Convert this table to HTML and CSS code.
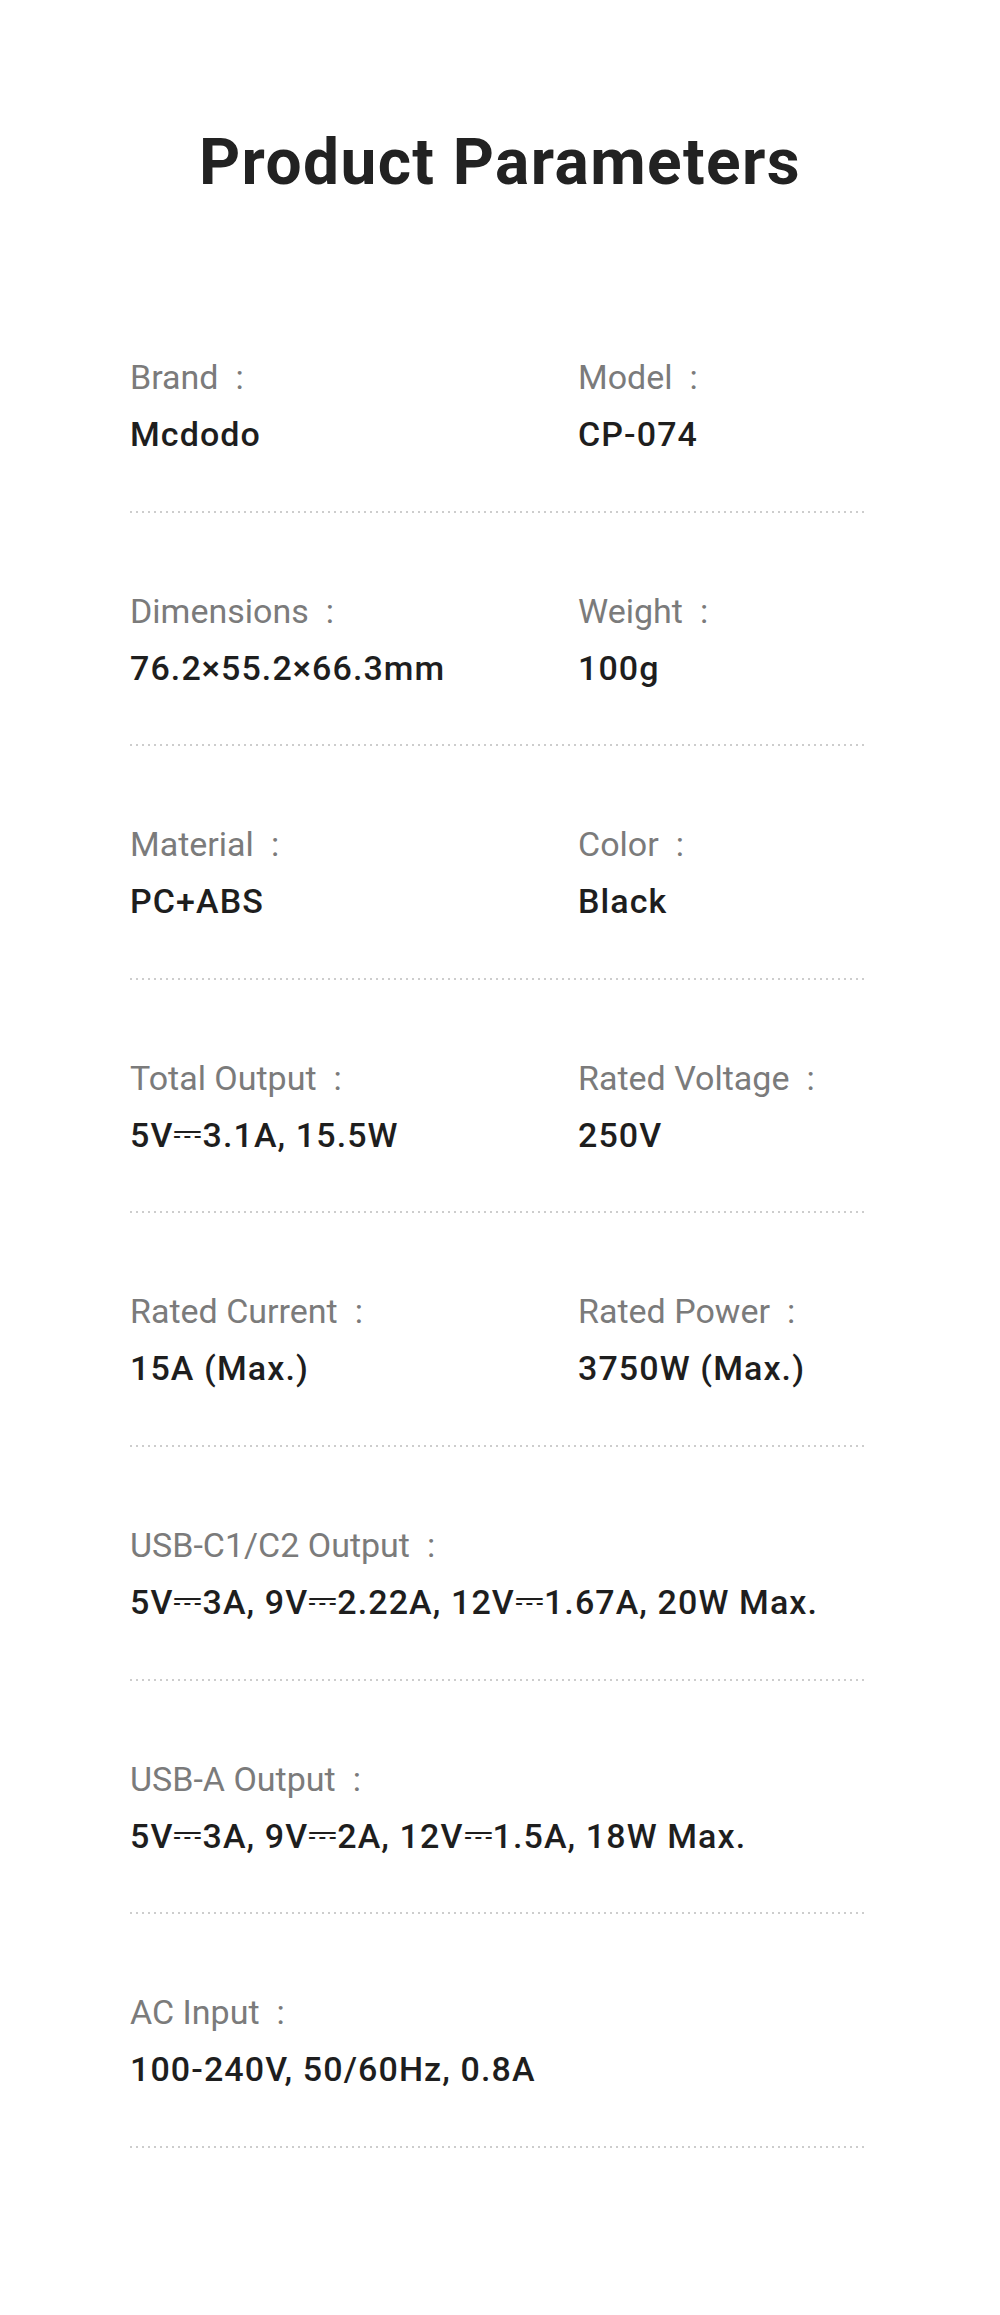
FILE: index.html
```html
<!DOCTYPE html>
<html lang="en">
<head>
    <meta charset="UTF-8">
    <meta name="viewport" content="width=device-width, initial-scale=1.0">
    <title>Product Parameters</title>
    <link rel="stylesheet" href="styles.css">
</head>
<body>
    <h1 class="title">Product Parameters</h1>

    <div class="params">
        <div class="param-row">
            <div class="param">
                <div class="param-label">Brand<span class="colon">:</span></div>
                <div class="param-value">Mcdodo</div>
            </div>
            <div class="param">
                <div class="param-label">Model<span class="colon">:</span></div>
                <div class="param-value">CP-074</div>
            </div>
        </div>
        <div class="param-row">
            <div class="param">
                <div class="param-label">Dimensions<span class="colon">:</span></div>
                <div class="param-value">76.2×55.2×66.3mm</div>
            </div>
            <div class="param">
                <div class="param-label">Weight<span class="colon">:</span></div>
                <div class="param-value">100g</div>
            </div>
        </div>
        <div class="param-row">
            <div class="param">
                <div class="param-label">Material<span class="colon">:</span></div>
                <div class="param-value">PC+ABS</div>
            </div>
            <div class="param">
                <div class="param-label">Color<span class="colon">:</span></div>
                <div class="param-value">Black</div>
            </div>
        </div>
        <div class="param-row">
            <div class="param">
                <div class="param-label">Total Output<span class="colon">:</span></div>
                <div class="param-value">5V<span class="dc">⎓</span>3.1A, 15.5W</div>
            </div>
            <div class="param">
                <div class="param-label">Rated Voltage<span class="colon">:</span></div>
                <div class="param-value">250V</div>
            </div>
        </div>
        <div class="param-row">
            <div class="param">
                <div class="param-label">Rated Current<span class="colon">:</span></div>
                <div class="param-value">15A (Max.)</div>
            </div>
            <div class="param">
                <div class="param-label">Rated Power<span class="colon">:</span></div>
                <div class="param-value">3750W (Max.)</div>
            </div>
        </div>
        <div class="param-row">
            <div class="param wide">
                <div class="param-label">USB-C1/C2 Output<span class="colon">:</span></div>
                <div class="param-value">5V<span class="dc">⎓</span>3A, 9V<span class="dc">⎓</span>2.22A, 12V<span class="dc">⎓</span>1.67A, 20W Max.</div>
            </div>
        </div>
        <div class="param-row">
            <div class="param wide">
                <div class="param-label">USB-A Output<span class="colon">:</span></div>
                <div class="param-value">5V<span class="dc">⎓</span>3A, 9V<span class="dc">⎓</span>2A, 12V<span class="dc">⎓</span>1.5A, 18W Max.</div>
            </div>
        </div>
        <div class="param-row">
            <div class="param wide">
                <div class="param-label">AC Input<span class="colon">:</span></div>
                <div class="param-value">100-240V, 50/60Hz, 0.8A</div>
            </div>
        </div>
    </div>
</body>
</html>
```

FILE: styles.css
```css
body {
    margin: 0;
    padding: 124px 0 166px;
    background: #fff;
    font-family: Roboto, "Noto Sans", Arial, sans-serif;
}
.title {
    margin: 0;
    font-size: 64px;
    line-height: 77px;
    font-weight: 700;
    letter-spacing: 1.4px;
    color: #222;
    text-align: center;
}
.params {
    width: 736px;
    margin: 78px 0 0 130px;
}
.param-row {
    display: grid;
    grid-template-columns: 448px 1fr;
    padding: 74px 0 54.6px;
    background: linear-gradient(to right, #cdcdcd 2px, transparent 2px) left bottom / 6px 2px repeat-x;
}
.param {
    display: flex;
    flex-direction: column;
    gap: 9px;
}
.param.wide {
    grid-column: 1 / 3;
}
.param-label {
    font-size: 34px;
    line-height: 48px;
    color: #7b7b7b;
}
.colon {
    margin-left: 17px;
}
.param-value {
    font-size: 34px;
    line-height: 48px;
    font-weight: 500;
    letter-spacing: 1.1px;
    color: #1e1e1e;
}
.dc {
    font-family: "DejaVu Sans", sans-serif;
    font-size: 36px;
    line-height: 0;
    letter-spacing: 0;
    vertical-align: 2px;
}
```
